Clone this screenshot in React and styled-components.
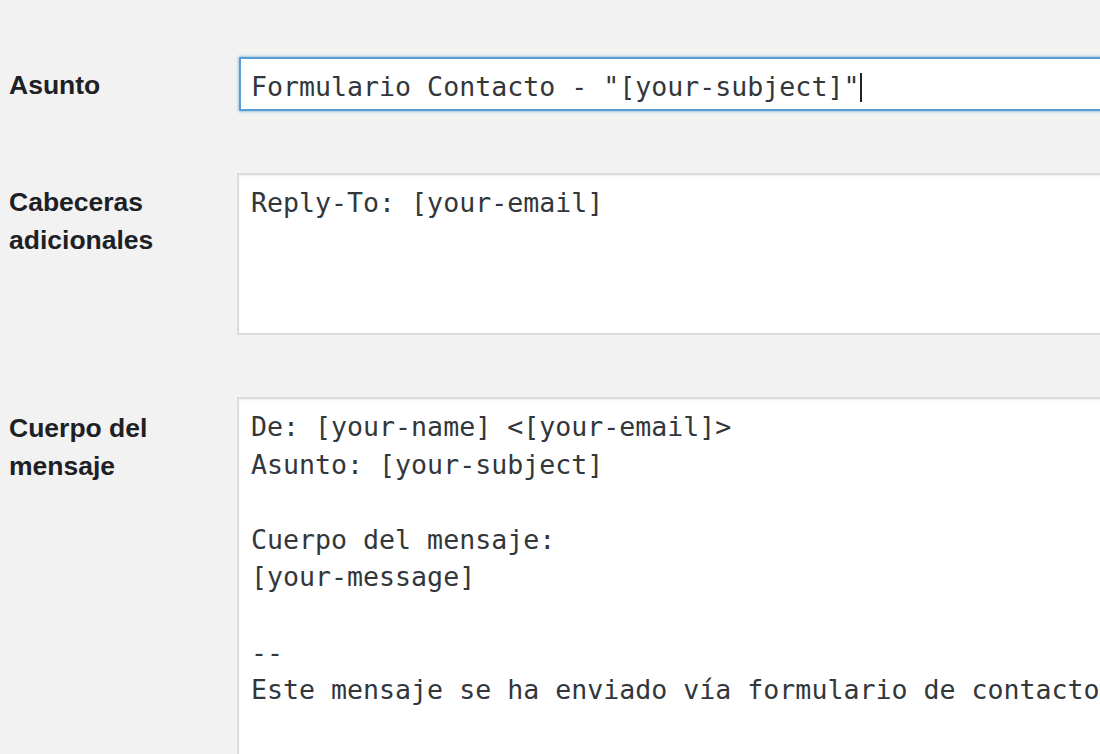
import React from "react";
import styled, { createGlobalStyle } from "styled-components";

const GlobalStyle = createGlobalStyle`
  html, body {
    margin: 0;
    padding: 0;
    background: #f2f2f2;
    overflow: hidden;
  }
`;

const FormTable = styled.div`
  padding: 26px 0 0 9px;
  width: 1300px;
`;

const Row = styled.div`
  display: grid;
  grid-template-columns: 228px 1fr;
  padding: 31px 0;
`;

const Label = styled.label`
  font-family: "Liberation Sans", Arial, sans-serif;
  font-weight: bold;
  font-size: 26.5px;
  line-height: 38px;
  color: #1d2125;
  padding-top: ${p => p.offset}px;
`;

const Field = styled.div`
  box-sizing: border-box;
  margin-left: ${p => (p.focused ? "2px" : "0")};
  height: ${p => p.height}px;
  background: #fff;
  border: 2px solid ${p => (p.focused ? "#5b9dd9" : "#dcdcdc")};
  box-shadow: ${p =>
    p.focused
      ? "0 0 3px rgba(30, 140, 190, 0.7)"
      : "inset 0 1px 2px rgba(0, 0, 0, 0.07)"};
  padding: ${p => (p.focused ? "9px 10px" : "9px 12px")};
  font-family: "DejaVu Sans Mono", Menlo, monospace;
  font-size: 26.6px;
  line-height: 37.6px;
  color: #32373c;
  white-space: pre;
  overflow: hidden;
`;

const Caret = styled.span`
  display: inline-block;
  width: 2px;
  height: 29px;
  margin-left: 1px;
  vertical-align: -6px;
  background: #222;
`;

const rows = [
  { id: 1, label: ["Asunto"], offset: 9, height: 54, focused: true, text: 'Formulario Contacto - "[your-subject]"' },
  { id: 2, label: ["Cabeceras", "adicionales"], offset: 10, height: 162, text: "Reply-To: [your-email]" },
  {
    id: 3,
    label: ["Cuerpo del", "mensaje"],
    offset: 12,
    height: 420,
    text: "De: [your-name] <[your-email]>\nAsunto: [your-subject]\n\nCuerpo del mensaje:\n[your-message]\n\n--\nEste mensaje se ha enviado vía formulario de contacto",
  },
];

const App = () => {
  return (
    <>
      <GlobalStyle />
      <FormTable>
        {rows.map(item => (
          <Row key={item.id}>
            <Label offset={item.offset}>
              {item.label.map((l, i) => (
                <div key={i}>{l}</div>
              ))}
            </Label>
            <Field height={item.height} focused={item.focused}>
              {item.text}
              {item.focused && <Caret />}
            </Field>
          </Row>
        ))}
      </FormTable>
    </>
  );
};

export default App;
